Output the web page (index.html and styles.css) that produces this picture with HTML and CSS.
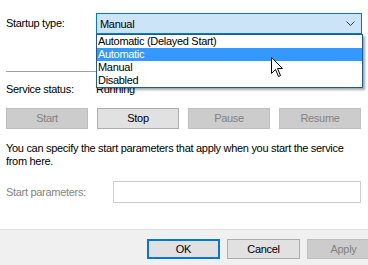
FILE: index.html
```html
<!DOCTYPE html>
<html lang="en">
<head>
    <meta charset="UTF-8">
    <title>Service Properties</title>
    <link rel="stylesheet" href="styles.css">
</head>
<body>
    <div class="page">
        <div class="panel">
            <div class="row startup">
                <label class="lbl">Startup type:</label>
                <div class="combo">
                    <span class="combo-text">Manual</span>
                    <svg class="chevron" width="9" height="5" viewBox="0 0 9 5">
                        <polyline points="0.5,0.5 4.5,4.5 8.5,0.5" fill="none" stroke="#3c3c3c" stroke-width="1"/>
                    </svg>
                    <ul class="list">
                        <li>Automatic (Delayed Start)</li>
                        <li class="selected">Automatic</li>
                        <li>Manual</li>
                        <li>Disabled</li>
                    </ul>
                </div>
            </div>
            <div class="sep"></div>
            <div class="row status">
                <span class="lbl">Service status:</span>
                <span>Running</span>
            </div>
            <div class="btns">
                <button class="btn" disabled>Start</button>
                <button class="btn">Stop</button>
                <button class="btn" disabled>Pause</button>
                <button class="btn" disabled>Resume</button>
            </div>
            <p class="note">You can specify the start parameters that apply when you start the service from here.</p>
            <div class="row params">
                <label class="lbl dim">Start parameters:</label>
                <div class="textbox"></div>
            </div>
        </div>
        <div class="footer">
            <button class="btn dlg default">OK</button>
            <button class="btn dlg">Cancel</button>
            <button class="btn dlg" disabled>Apply</button>
        </div>
        <!-- mouse pointer over the open list -->
        <svg class="cursor" width="13" height="21" viewBox="0 0 13 21">
            <path d="M0.5,0.5 L0.5,16.5 L4.5,12.5 L7.5,19.5 L9.5,18.5 L6.5,11.5 L11.5,11.5 Z" fill="#fff" stroke="#000" stroke-width="1" stroke-linejoin="miter"/>
        </svg>
    </div>
</body>
</html>
```

FILE: styles.css
```css
body {
    margin: 0;
    font-family: "Liberation Sans", Arial, sans-serif;
    font-size: 11px;
    line-height: 13px;
    letter-spacing: -0.3px;
    color: #000;
    background: #fff;
}
.page {
    position: relative;
    width: 368px;
    height: 265px;
    display: flex;
    flex-direction: column;
    overflow: hidden;
}
.panel {
    padding: 0 6px;
}
.row {
    display: flex;
    align-items: center;
}
.lbl {
    width: 90px;
    flex-shrink: 0;
}
.dim {
    color: #838383;
}
.startup {
    margin-top: 13px;
}
.combo {
    position: relative;
    box-sizing: border-box;
    width: 267px;
    height: 21px;
    border: 1px solid #0078d7;
    background: #cce4f7;
    display: flex;
    align-items: center;
    justify-content: space-between;
    padding: 0 6px 0 3px;
}
.combo-text {
    padding-top: 1px;
}
.list {
    position: absolute;
    top: 20px;
    left: -1px;
    width: 267px;
    box-sizing: border-box;
    margin: 0;
    padding: 0;
    list-style: none;
    background: #fff;
    border: 1px solid #1c5b94;
    box-shadow: 2px 2px 2px rgba(0, 0, 0, 0.35);
    z-index: 2;
}
.list li {
    height: 13px;
    padding-left: 1px;
}
.list li.selected {
    background: #3399ff;
    color: #fff;
}
.sep {
    height: 1px;
    background: #a0a0a0;
    margin-top: 37px;
}
.status {
    margin-top: 11px;
}
.btns {
    display: flex;
    gap: 9px;
    margin-top: 12px;
}
.btn {
    box-sizing: border-box;
    width: 82px;
    height: 21px;
    padding: 0;
    font: inherit;
    letter-spacing: inherit;
    color: #000;
    background: #e1e1e1;
    border: 1px solid #adadad;
}
.btn:disabled {
    background: #cccccc;
    border-color: #bfbfbf;
    color: #838383;
}
.note {
    margin: 13px 0 0;
}
.params {
    margin-top: 13px;
}
.params .lbl {
    width: 107px;
}
.textbox {
    box-sizing: border-box;
    width: 248px;
    height: 22px;
    border: 1px solid #cccccc;
}
.footer {
    margin-top: auto;
    height: 36px;
    box-sizing: border-box;
    border-top: 1px solid #dfdfdf;
    background: #f0f0f0;
    display: flex;
    gap: 7px;
    padding: 9px 0 0 147px;
}
.btn.dlg {
    width: 73px;
    height: 20px;
    flex-shrink: 0;
}
.btn.default {
    border: 2px solid #0078d7;
}
.cursor {
    position: absolute;
    left: 271px;
    top: 57px;
    z-index: 3;
}
```
